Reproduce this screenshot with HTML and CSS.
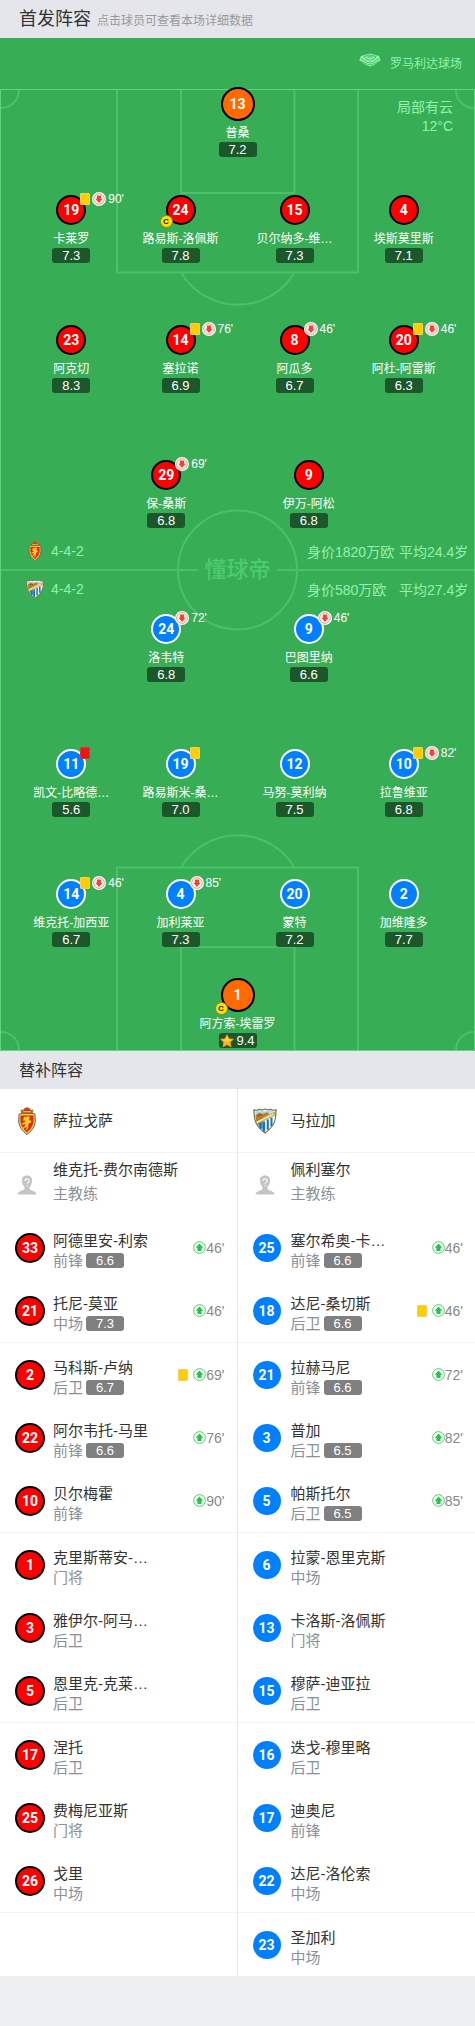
FILE: index.html
```html
<!DOCTYPE html>
<html lang="zh-CN">
<head>
<meta charset="utf-8">
<meta name="viewport" content="width=device-width, initial-scale=1">
<title>首发阵容</title>
<link rel="stylesheet" href="styles.css">
</head>
<body>
<svg class="defs" aria-hidden="true">
  <symbol id="off" viewBox="0 0 14 14"><circle cx="7" cy="7" r="7" fill="#fff"/><circle cx="7" cy="7" r="5.300" fill="#fff" stroke="#f9826f" stroke-width=".9"/><path d="M4.900 3.500h4.200v3.300h1.500L7 10.900 3.400 6.800h1.500z" fill="#f9412a"/></symbol>
  <symbol id="on" viewBox="0 0 14 14"><circle cx="7" cy="7" r="6.300" fill="#fff" stroke="#3ccb5c" stroke-width="1"/><path d="M4.800 10.900V7.400H2.900L7 2.600l4.100 4.800H9.200v3.500z" fill="#1fc844"/></symbol>
  <symbol id="star" viewBox="0 0 14 14"><path d="M7 .8l1.900 4 4.400.5-3.200 3 .9 4.500L7 10.600l-4 2.200.9-4.500-3.200-3 4.400-.5z" fill="#ffb91d" stroke="#ffa012" stroke-width=".8" stroke-linejoin="round"/><path d="M7 2.200l1.300 3.200 3.500.4-4.800 2-4.800-2 3.500-.4z" fill="#ffd552"/></symbol>
  <symbol id="zaragoza" viewBox="0 0 18 28"><path d="M3.500 6 3 2.800l2 .8L6.500 1.500 9 .5l2.500 1L13 3.600l2-.8-.5 3.200z" fill="#d5341c" stroke="#a78918" stroke-width=".8"/><path d="M5 4.700h8" stroke="#f6cf2c" stroke-width="1.200"/><path d="M.8 7.300 3 6.400h12l2.200.9c-.4 2 .2 3.700.1 6.700C17 20 13.500 24 9 27.500 4.500 24 1 20 .7 14c-.1-3 .5-4.700.1-6.700z" fill="#f4cc26" stroke="#334e7c" stroke-width=".8"/><path d="M2.600 8.400h12.800c.4 6.800.2 11-6.400 16.800C2.400 19.400 2.200 15.200 2.600 8.400z" fill="#e52515"/><path d="M6 9.500l2 1 .5-1.300 2.500.3 1.500 1.800-1.700.4 1 2.300 1.400-1-.3 2.800-2.400.7-.2 3.500-1.300 3-1-.3.8-2.800-2.500.8-1 1.500-.9-1.300 2.600-1.800-.2-2-2.500.6-.4-1.500 2.900-1.200.4-1.500-2.300.2z" fill="#f8cf28"/></symbol>
  <symbol id="malaga" viewBox="0 0 26 28"><path d="M1 2c2.500.8 4.500.2 6-.8 1.800 1.100 4 1 6-.2 2 1.200 4.200 1.300 6 .2 1.500 1 3.500 1.600 6 .8-.5 10-.3 16-12 25C1.300 18 1.500 12 1 2z" fill="#fff" stroke="#746f42" stroke-width="1.300"/><path d="M2.500 3.500h10L23 3.200 3.300 14z" fill="#a6d4ee"/><path d="M2.600 8l4-3 4 1.500L15 4.500l3 2L3.500 15z" fill="#c07a28"/><path d="M5 8.500l3-1.500 2 1" fill="none" stroke="#713f13" stroke-width="1"/><path d="M4.500 17 23.800 8c0 7-3.500 13-10.800 18.200C8.500 23 6 20 4.500 17z" fill="#f5fafc"/><path d="M8 16v6.500M12 14.500v11M16 12.500v11M20 10.500v9" stroke="#1972bb" stroke-width="2.200"/><path d="M4.300 17 13 26.200 10.500 14z" fill="#1672b8" opacity=".75"/><path d="M2.800 14.500 23.500 4.200v3.600L4.200 17.500z" fill="#e5c945" stroke="#8b823d" stroke-width=".6"/><path d="M5 15l16.500-8.200" stroke="#fffbe0" stroke-width="1.500" stroke-dasharray="1.500 1"/></symbol>
  <symbol id="coach" viewBox="0 0 20 20"><path d="M10 .5c4 0 5.500 2.500 5 6-.3 2.600-1.300 4.200-2.500 5.500v2c.8 1.500 6.500 1.800 7 5.500H.5c.5-3.700 6.200-4 7-5.500v-2C6.300 10.700 5.300 9.100 5 6.500c-.5-3.500 1-6 5-6z" fill="#c4c4c4"/><path d="M7.900 5.900c0-2.700 4.400-2.600 4.400-.1 0 1.600-2.200 1.600-2.200 3M10.100 10V11.300" fill="none" stroke="#fff" stroke-width="1.100"/></symbol>
</svg>

<header class="bar">
  <h1 class="bar-title">首发阵容</h1>
  <span class="bar-note">点击球员可查看本场详细数据</span>
</header>

<main>
<section class="pitch">
  <svg class="lines" viewBox="0 0 475 1013" preserveAspectRatio="none" aria-hidden="true">
    <g fill="none" stroke="#4bc169" stroke-width="2">
      <path d="M117 52v182.500h241V52M181 52v103h113.500V52M181 234.500a66 66 0 0 0 113.500 0"/>
      <path d="M117 1012V829.500h241V1012M181 1012V909h113.500v103M181 829.500a66 66 0 0 1 113.500 0"/>
      <circle cx="237.500" cy="532" r="59.500"/>
      <path d="M1 532h197M277 532h197"/>
      <path d="M19 52A18 18 0 0 1 1 70M456 52a18 18 0 0 0 18 18M1 994a18 18 0 0 1 18 18M474 994a18 18 0 0 0-18 18"/>
    </g>
    <path d="M.5 51.500h474v961H.5z" fill="none" stroke="#5fd580"/>
  </svg>
  <div class="watermark">懂球帝</div>
  <div class="weather"><div>局部有云</div><div>12°C</div></div>

  <div class="venue">
    <svg width="22" height="14" viewBox="0 0 22 14" aria-hidden="true"><path d="M11 .5 20 3l1.700 4.500L15 12l-4 1.500L7 12 .3 7.500 2 3z" fill="#93f2ae"/><path d="M2 5.500 7.500 9 11 10l3.500-1L20 5.500M1.500 8 7.500 11l3.500 1 3.500-1 6-3" fill="none" stroke="#37ae55" stroke-width=".7"/><path d="M11 2 17 3.500 15 6l-4 1.300L7 6 5 3.500z" fill="none" stroke="#37ae55" stroke-width=".8"/><path d="M8.500 4h5" stroke="#37ae55"/></svg>
    <span>罗马利达球场</span>
  </div>

  <div class="row keeper-row">
    <a class="player" href="#h13"><span class="shirt keeper">13</span><span class="name">普桑</span><span class="rate">7.2</span></a>
  </div>
  <div class="row four r-def-home">
    <a class="player" href="#h19"><span class="shirt home">19<span class="events"><i class="card"></i><svg class="swap"><use href="#off"/></svg>90'</span></span><span class="name">卡莱罗</span><span class="rate">7.3</span></a>
    <a class="player" href="#h24"><span class="shirt home">24<b class="cap">C</b></span><span class="name">路易斯-洛佩斯</span><span class="rate">7.8</span></a>
    <a class="player" href="#h15"><span class="shirt home">15</span><span class="name">贝尔纳多-维…</span><span class="rate">7.3</span></a>
    <a class="player" href="#h4"><span class="shirt home">4</span><span class="name">埃斯莫里斯</span><span class="rate">7.1</span></a>
  </div>
  <div class="row four r-mid-home">
    <a class="player" href="#h23"><span class="shirt home">23</span><span class="name">阿克切</span><span class="rate">8.3</span></a>
    <a class="player" href="#h14"><span class="shirt home">14<span class="events"><i class="card"></i><svg class="swap"><use href="#off"/></svg>76'</span></span><span class="name">塞拉诺</span><span class="rate">6.9</span></a>
    <a class="player" href="#h8"><span class="shirt home">8<span class="events"><svg class="swap"><use href="#off"/></svg>46'</span></span><span class="name">阿瓜多</span><span class="rate">6.7</span></a>
    <a class="player" href="#h20"><span class="shirt home">20<span class="events"><i class="card"></i><svg class="swap"><use href="#off"/></svg>46'</span></span><span class="name">阿杜-阿雷斯</span><span class="rate">6.3</span></a>
  </div>
  <div class="row two r-att-home">
    <a class="player" href="#h29"><span class="shirt home">29<span class="events"><svg class="swap"><use href="#off"/></svg>69'</span></span><span class="name">保-桑斯</span><span class="rate">6.8</span></a>
    <a class="player" href="#h9"><span class="shirt home">9</span><span class="name">伊万-阿松</span><span class="rate">6.8</span></a>
  </div>

  <div class="squads">
    <div class="squad"><svg class="mini"><use href="#zaragoza"/></svg><span class="formation">4-4-2</span><span class="worth">身价1820万欧</span><span>平均24.4岁</span></div>
    <div class="squad"><svg class="mini"><use href="#malaga"/></svg><span class="formation">4-4-2</span><span class="worth">身价580万欧</span><span>平均27.4岁</span></div>
  </div>

  <div class="row two r-att-away">
    <a class="player" href="#a24"><span class="shirt away">24<span class="events"><svg class="swap"><use href="#off"/></svg>72'</span></span><span class="name">洛韦特</span><span class="rate">6.8</span></a>
    <a class="player" href="#a9"><span class="shirt away">9<span class="events"><svg class="swap"><use href="#off"/></svg>46'</span></span><span class="name">巴图里纳</span><span class="rate">6.6</span></a>
  </div>
  <div class="row four r-mid-away">
    <a class="player" href="#a11"><span class="shirt away">11<span class="events"><i class="card red"></i></span></span><span class="name">凯文-比略德…</span><span class="rate">5.6</span></a>
    <a class="player" href="#a19"><span class="shirt away">19<span class="events"><i class="card"></i></span></span><span class="name">路易斯米-桑…</span><span class="rate">7.0</span></a>
    <a class="player" href="#a12"><span class="shirt away">12</span><span class="name">马努-莫利纳</span><span class="rate">7.5</span></a>
    <a class="player" href="#a10"><span class="shirt away">10<span class="events"><i class="card"></i><svg class="swap"><use href="#off"/></svg>82'</span></span><span class="name">拉鲁维亚</span><span class="rate">6.8</span></a>
  </div>
  <div class="row four r-def-away">
    <a class="player" href="#a14"><span class="shirt away">14<span class="events"><i class="card"></i><svg class="swap"><use href="#off"/></svg>46'</span></span><span class="name">维克托-加西亚</span><span class="rate">6.7</span></a>
    <a class="player" href="#a4"><span class="shirt away">4<span class="events"><svg class="swap"><use href="#off"/></svg>85'</span></span><span class="name">加利莱亚</span><span class="rate">7.3</span></a>
    <a class="player" href="#a20"><span class="shirt away">20</span><span class="name">蒙特</span><span class="rate">7.2</span></a>
    <a class="player" href="#a2"><span class="shirt away">2</span><span class="name">加维隆多</span><span class="rate">7.7</span></a>
  </div>
  <div class="row keeper-row r-keeper-away">
    <a class="player" href="#a1"><span class="shirt keeper">1<b class="cap">C</b></span><span class="name">阿方索-埃雷罗</span><span class="rate"><svg class="star"><use href="#star"/></svg>9.4</span></a>
  </div>
</section>

<section>
  <div class="bar"><h2 class="bar-title small">替补阵容</h2></div>
  <div class="bench">
    <ul class="side">
      <li class="entry team"><span class="slot"><svg class="crest"><use href="#zaragoza"/></svg></span><span class="who">萨拉戈萨</span></li>
      <li class="entry coach"><span class="slot"><svg class="avatar"><use href="#coach"/></svg></span><span class="who">维克托-费尔南德斯<small>主教练</small></span></li>
      <li class="entry"><span class="slot"><span class="shirt home">33</span></span><span class="who">阿德里安-利索<small>前锋<em class="rate">6.6</em></small></span><span class="log"><svg class="swap"><use href="#on"/></svg>46'</span></li>
      <li class="entry"><span class="slot"><span class="shirt home">21</span></span><span class="who">托尼-莫亚<small>中场<em class="rate">7.3</em></small></span><span class="log"><svg class="swap"><use href="#on"/></svg>46'</span></li>
      <li class="entry"><span class="slot"><span class="shirt home">2</span></span><span class="who">马科斯-卢纳<small>后卫<em class="rate">6.7</em></small></span><span class="log"><i class="card"></i><svg class="swap"><use href="#on"/></svg>69'</span></li>
      <li class="entry"><span class="slot"><span class="shirt home">22</span></span><span class="who">阿尔韦托-马里<small>前锋<em class="rate">6.6</em></small></span><span class="log"><svg class="swap"><use href="#on"/></svg>76'</span></li>
      <li class="entry"><span class="slot"><span class="shirt home">10</span></span><span class="who">贝尔梅霍<small>前锋</small></span><span class="log"><svg class="swap"><use href="#on"/></svg>90'</span></li>
      <li class="entry"><span class="slot"><span class="shirt home">1</span></span><span class="who">克里斯蒂安-…<small>门将</small></span></li>
      <li class="entry"><span class="slot"><span class="shirt home">3</span></span><span class="who">雅伊尔-阿马…<small>后卫</small></span></li>
      <li class="entry"><span class="slot"><span class="shirt home">5</span></span><span class="who">恩里克-克莱…<small>后卫</small></span></li>
      <li class="entry"><span class="slot"><span class="shirt home">17</span></span><span class="who">涅托<small>后卫</small></span></li>
      <li class="entry"><span class="slot"><span class="shirt home">25</span></span><span class="who">费梅尼亚斯<small>门将</small></span></li>
      <li class="entry"><span class="slot"><span class="shirt home">26</span></span><span class="who">戈里<small>中场</small></span></li>
    </ul>
    <ul class="side">
      <li class="entry team"><span class="slot"><svg class="crest"><use href="#malaga"/></svg></span><span class="who">马拉加</span></li>
      <li class="entry coach"><span class="slot"><svg class="avatar"><use href="#coach"/></svg></span><span class="who">佩利塞尔<small>主教练</small></span></li>
      <li class="entry"><span class="slot"><span class="shirt away">25</span></span><span class="who">塞尔希奥-卡…<small>前锋<em class="rate">6.6</em></small></span><span class="log"><svg class="swap"><use href="#on"/></svg>46'</span></li>
      <li class="entry"><span class="slot"><span class="shirt away">18</span></span><span class="who">达尼-桑切斯<small>后卫<em class="rate">6.6</em></small></span><span class="log"><i class="card"></i><svg class="swap"><use href="#on"/></svg>46'</span></li>
      <li class="entry"><span class="slot"><span class="shirt away">21</span></span><span class="who">拉赫马尼<small>前锋<em class="rate">6.6</em></small></span><span class="log"><svg class="swap"><use href="#on"/></svg>72'</span></li>
      <li class="entry"><span class="slot"><span class="shirt away">3</span></span><span class="who">普加<small>后卫<em class="rate">6.5</em></small></span><span class="log"><svg class="swap"><use href="#on"/></svg>82'</span></li>
      <li class="entry"><span class="slot"><span class="shirt away">5</span></span><span class="who">帕斯托尔<small>后卫<em class="rate">6.5</em></small></span><span class="log"><svg class="swap"><use href="#on"/></svg>85'</span></li>
      <li class="entry"><span class="slot"><span class="shirt away">6</span></span><span class="who">拉蒙-恩里克斯<small>中场</small></span></li>
      <li class="entry"><span class="slot"><span class="shirt away">13</span></span><span class="who">卡洛斯-洛佩斯<small>门将</small></span></li>
      <li class="entry"><span class="slot"><span class="shirt away">15</span></span><span class="who">穆萨-迪亚拉<small>后卫</small></span></li>
      <li class="entry"><span class="slot"><span class="shirt away">16</span></span><span class="who">迭戈-穆里略<small>后卫</small></span></li>
      <li class="entry"><span class="slot"><span class="shirt away">17</span></span><span class="who">迪奥尼<small>前锋</small></span></li>
      <li class="entry"><span class="slot"><span class="shirt away">22</span></span><span class="who">达尼-洛伦索<small>中场</small></span></li>
      <li class="entry"><span class="slot"><span class="shirt away">23</span></span><span class="who">圣加利<small>中场</small></span></li>
    </ul>
  </div>
</section>
</main>
</body>
</html>
```

FILE: styles.css
```css
* { box-sizing: border-box; }

body {
  margin: 0;
  background: #eeeff1;
  color: #333;
  font-family: "Liberation Sans", "Noto Sans CJK SC", sans-serif;
}

a { color: inherit; text-decoration: none; }
.defs { position: absolute; width: 0; height: 0; }

/* Section bars */
.bar {
  display: flex;
  align-items: center;
  gap: 6px;
  height: 38px;
  padding: 0 19px;
  background: #e4e6eb;
}
.bar-title { margin: 0; font-size: 18px; font-weight: 400; line-height: 38px; }
.bar-title.small { padding-top: 1px; font-size: 16px; }
.bar-note { font-size: 12px; color: #999; }

/* Pitch */
.pitch {
  position: relative;
  padding-bottom: 3px;
  background: #37ae55;
  color: #fff;
}
.lines { position: absolute; inset: 0; width: 100%; height: 100%; }
.venue {
  position: relative;
  display: flex;
  justify-content: flex-end;
  align-items: center;
  gap: 9px;
  height: 49px;
  padding: 0 13px 0 0;
  font-size: 12px;
  color: #93f2ae;
}
.venue svg { margin-bottom: 6px; }
.weather {
  position: absolute;
  top: 60px;
  right: 22px;
  font-size: 14px;
  line-height: 19px;
  text-align: right;
  color: #93f2ae;
}
.watermark {
  position: absolute;
  top: 516px;
  left: 0;
  right: 0;
  font-size: 22px;
  font-weight: 500;
  line-height: 32px;
  text-align: center;
  color: #4bcb6e;
}

.row { position: relative; display: grid; }
.four { grid-template-columns: 23fr 23fr 25fr 21fr; padding: 0 4.5% 0 3.5%; }
.two { grid-template-columns: 1fr 1fr; padding: 0 20%; }
.r-def-home { margin-top: 38px; }
.r-mid-home, .r-def-away { margin-top: 62px; }
.r-att-home, .r-mid-away { margin-top: 67px; }
.r-keeper-away { margin-top: 31px; }

.player {
  display: flex;
  flex-direction: column;
  align-items: center;
  min-width: 0;
}
.shirt {
  position: relative;
  display: flex;
  justify-content: center;
  align-items: center;
  width: 30px;
  height: 30px;
  border-radius: 50%;
  font: 700 14px/1 Roboto, sans-serif;
  color: #fff;
}
.home { background: #f00; border: 2px solid #000; }
.away { background: #007fff; border: 2px solid #fff; }
.keeper { width: 34px; height: 34px; background: #ff6a00; border: 2px solid #000; }
.name {
  margin-top: 5px;
  font-size: 12px;
  line-height: 18px;
  white-space: nowrap;
}
.keeper + .name { margin-top: 3px; }
.rate {
  display: flex;
  justify-content: center;
  align-items: center;
  gap: 2px;
  width: 38px;
  height: 15px;
  border-radius: 3px;
  background: #1c572b;
  font-size: 13px;
  font-style: normal;
  line-height: 15px;
  color: #fff;
}
.star { width: 14px; height: 14px; }
.events {
  position: absolute;
  top: -5px;
  left: 22px;
  display: flex;
  align-items: center;
  gap: 2px;
  height: 14px;
  font: 12px/14px "Liberation Sans", sans-serif;
}
.card { width: 10px; height: 12px; border-radius: 1px; background: #fc0; border: 1px solid #f5d057; }
.card.red { background: #f01414; border-color: #d33; }
.swap { width: 14px; height: 14px; }
.cap {
  position: absolute;
  left: -8px;
  bottom: -5px;
  width: 13px;
  height: 13px;
  border: 1px solid #8a8a20;
  border-radius: 50%;
  background: #ffe000;
  font: 700 8px/11px "Liberation Sans", sans-serif;
  text-align: center;
  color: #222;
}

.squads { position: relative; padding: 4px 0 6px; }
.squad {
  display: grid;
  grid-template-columns: 18px 1fr 92px 70px;
  align-items: center;
  height: 38px;
  padding: 0 6px 0 26px;
  font-size: 14px;
  color: #93f2ae;
  white-space: nowrap;
}
.formation { padding-left: 7px; }
.mini { width: 18px; height: 20px; }

/* Bench */
.bench {
  display: grid;
  grid-template-columns: 1fr 1fr;
  background: #fff;
}
.side { margin: 0; padding: 0; list-style: none; }
.side:first-child { border-right: 1px solid #e9e9eb; }
.entry {
  display: flex;
  align-items: center;
  min-height: 63px;
  padding: 0 12px 0 15px;
}
.entry:nth-child(3n+1) { min-height: 64px; border-bottom: 1px solid #f3f3f4; }
.entry:last-child { border-bottom-width: 0; }
.side:first-child .entry:last-child { border-bottom-width: 1px; }
.slot { display: flex; width: 38px; }
.slot .away { width: 28px; height: 28px; border: 0; }
.who { padding-top: 6px; font-size: 15px; line-height: 20px; white-space: nowrap; }
.who small { display: flex; align-items: center; gap: 3px; font-size: 15px; color: #8a9099; }
.who .rate { background: #808080; }
.coach .who { padding: 0 0 6px; line-height: 24px; }
.team .who { padding-top: 1px; }
.crest { width: 24px; height: 28px; }
.avatar { width: 20px; height: 20px; margin-left: 2px; }
.log {
  display: flex;
  align-items: center;
  margin-left: auto;
  font-size: 14px;
  color: #888;
}
.log .swap { width: 13px; height: 13px; }
.log .card { margin-right: 5px; }
```
